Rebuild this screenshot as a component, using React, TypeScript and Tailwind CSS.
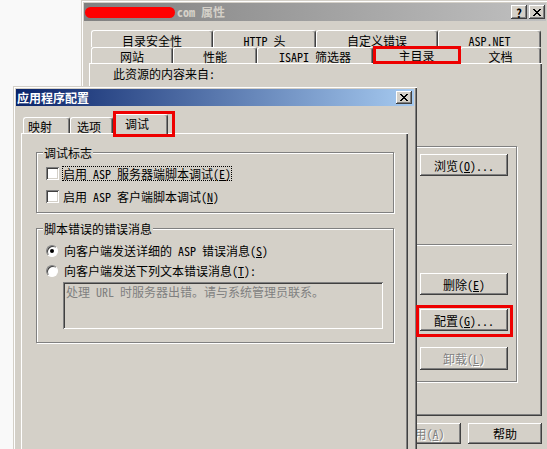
import React from "react";

const FONT =
  "font-['Noto_Sans_Mono_CJK_SC','Noto_Sans_CJK_SC','Noto_Sans_CJK_JP',sans-serif]";

type P = { children?: React.ReactNode; className?: string };

function XGlyph() {
  const rows = ["11000011", "01100110", "00111100", "00011000", "00111100", "01100110", "11000011"];
  const rects: React.ReactNode[] = [];
  rows.forEach((r, y) =>
    r.split("").forEach((c, x) => {
      if (c === "1") rects.push(<rect key={`${x}-${y}`} x={x} y={y} width={1} height={1} fill="#000" />);
    })
  );
  return (
    <svg width="8" height="7" viewBox="0 0 8 7" shapeRendering="crispEdges">
      {rects}
    </svg>
  );
}

function Btn({ children, className = "", disabled = false }: P & { disabled?: boolean }) {
  return (
    <div
      className={`flex items-center justify-center bg-[#d4d0c8] text-[12px] leading-[13px] shadow-[inset_-1px_-1px_#404040,inset_1px_1px_#ffffff,inset_-2px_-2px_#808080] ${
        disabled ? "text-[#808080] [text-shadow:1px_1px_0_#ffffff]" : "text-black"
      } ${className}`}
    >
      {children}
    </div>
  );
}

function Tab({ children, className = "" }: P) {
  return (
    <div
      className={`flex items-center bg-[#d4d0c8] rounded-t-[3px] border-t border-l border-r border-t-white border-l-white border-r-[#404040] shadow-[inset_-1px_0_#808080] leading-[13px] whitespace-nowrap ${className}`}
    >
      {children}
    </div>
  );
}

function Group({ label, children, className = "" }: P & { label: string }) {
  return (
    <div
      className={`relative border border-[#808080] shadow-[inset_1px_1px_#ffffff,1px_1px_#ffffff] ${className}`}
    >
      <span className="absolute left-[6px] -top-[7px] bg-[#d4d0c8] px-[1px] leading-[13px] whitespace-nowrap">
        {label}
      </span>
      {children}
    </div>
  );
}

function Checkbox() {
  return (
    <div className="w-[13px] h-[13px] shrink-0 bg-white shadow-[inset_1px_1px_#808080,inset_-1px_-1px_#ffffff,inset_2px_2px_#404040,inset_-2px_-2px_#d4d0c8]" />
  );
}

function Radio({ on = false }: { on?: boolean }) {
  return (
    <div className="w-[12px] h-[12px] shrink-0 rounded-full bg-white border border-t-[#808080] border-l-[#808080] border-b-white border-r-white shadow-[inset_1px_1px_#404040] flex items-center justify-center">
      {on && <div className="w-[4px] h-[4px] rounded-full bg-black" />}
    </div>
  );
}

const panelShadow =
  "shadow-[inset_1px_1px_#ffffff,inset_-1px_-1px_#404040,inset_-2px_-2px_#808080]";

export default function App() {
  return (
    <div className={`relative w-[547px] h-[449px] overflow-hidden bg-[#f9f9f9] ${FONT} text-[12px] text-black`}>
      {/* ---------- back dialog: properties ---------- */}
      <div className="absolute left-[81px] top-0 w-[468px] h-[470px] bg-[#d4d0c8] p-[3px] shadow-[inset_1px_1px_#d4d0c8,inset_2px_2px_#ffffff,inset_-1px_-1px_#404040,inset_-2px_-2px_#808080]">
        <div className="flex items-center h-[18px] bg-[linear-gradient(to_right,#808080,#c0c0c0)] pr-[1px]">
          <span className="ml-[1px] block w-[90px] h-[11px] rounded-[6px] bg-[#ff0000]" />
          <span className="ml-[2px] font-bold text-[#d4d0c8] leading-[12px] whitespace-pre">com 属性</span>
          <div className="ml-auto flex gap-[2px]">
            <Btn className="w-[16px] h-[14px] font-bold">?</Btn>
            <Btn className="w-[16px] h-[14px]">
              <XGlyph />
            </Btn>
          </div>
        </div>

        <div className="mt-[9px] ml-[7px] flex h-[17px]">
          <Tab className="w-[122px] justify-center pt-[2px]">目录安全性</Tab>
          <Tab className="w-[103px] justify-center pt-[2px]">HTTP 头</Tab>
          <Tab className="w-[122px] justify-center pt-[2px]">自定义错误</Tab>
          <Tab className="w-[103px] justify-center pt-[2px]">ASP.NET</Tab>
        </div>
        <div className="relative ml-[7px] flex h-[17px]">
          <Tab className="w-[82px] h-[16px] justify-center pt-[2px]">网站</Tab>
          <Tab className="w-[84px] h-[16px] justify-center pt-[2px]">性能</Tab>
          <Tab className="w-[116px] h-[16px] justify-center pt-[2px]">ISAPI 筛选器</Tab>
          <Tab className="relative z-10 w-[87px] h-[17px] justify-center pb-[2px]">主目录</Tab>
          <Tab className="w-[81px] h-[16px] justify-center pt-[2px]">文档</Tab>
          <span className="absolute z-20 left-[282px] -top-[1px] w-[88px] h-[18px] border-[3px] border-[#ee0000]" />
        </div>

        <div className={`-mt-[1px] ml-[5px] w-[453px] h-[353px] ${panelShadow}`}>
          <div className="pt-[5px] pl-[24px] leading-[12px]">此资源的内容来自:</div>
          <div className="mt-[66px] ml-[18px] w-[410px] flex flex-col items-end border border-[#808080] shadow-[inset_1px_1px_#ffffff,1px_1px_#ffffff] pb-[11px]">
            <Btn className="mt-[7px] mr-[8px] w-[88px] h-[22px]">
              浏览(<u>O</u>)...
            </Btn>
            <div className="mt-[68px] mr-[4px] w-[380px] h-[2px] border-t border-t-[#808080] border-b border-b-white" />
            <Btn className="mt-[27px] mr-[8px] w-[88px] h-[22px]">
              删除(<u>E</u>)
            </Btn>
            <div className="relative mt-[14px] mr-[8px]">
              <Btn className="w-[88px] h-[22px]">
                配置(<u>G</u>)...
              </Btn>
              <span className="absolute z-20 -left-[4px] -top-[4px] -right-[5px] -bottom-[6px] border-[3px] border-[#ee0000]" />
            </div>
            <Btn disabled className="mt-[16px] mr-[8px] w-[88px] h-[23px]">
              卸载(<u>L</u>)
            </Btn>
          </div>
        </div>

        <div className="mt-[7px] mr-[4px] flex justify-end gap-[7px]">
          <Btn className="w-[75px] h-[21px]">确定</Btn>
          <Btn className="w-[75px] h-[21px]">取消</Btn>
          <Btn disabled className="w-[75px] h-[21px]">
            应用(<u>A</u>)
          </Btn>
          <Btn className="w-[74px] h-[21px]">帮助</Btn>
        </div>
      </div>

      {/* ---------- front dialog: application configuration ---------- */}
      <div className="absolute z-10 left-[13px] top-[86px] w-[404px] h-[380px] bg-[#d4d0c8] p-[3px] shadow-[inset_1px_1px_#d4d0c8,inset_2px_2px_#ffffff,inset_-1px_-1px_#404040,inset_-2px_-2px_#808080]">
        <div className="flex items-center h-[17px] bg-[linear-gradient(to_right,#0a246a,#a6caf0)] pl-[1px] pr-[2px]">
          <span className="font-bold text-white leading-[13px] whitespace-nowrap">应用程序配置</span>
          <Btn className="ml-auto w-[16px] h-[13px]">
            <XGlyph />
          </Btn>
        </div>

        <div className="relative mt-[8px] ml-[5px] flex items-end h-[20px] pl-[2px]">
          <Tab className="w-[47px] h-[16px] mb-[1px] pl-[4px] pt-[2px]">映射</Tab>
          <Tab className="w-[43px] h-[16px] mb-[1px] pl-[6px] pt-[2px]">选项</Tab>
          <Tab className="relative z-10 w-[55px] h-[20px] pl-[11px] pb-[3px]">调试</Tab>
          <span className="absolute z-20 left-[92px] -top-[3px] w-[62px] h-[26px] border-[3px] border-[#ee0000]" />
        </div>

        <div className={`-mt-[1px] ml-[5px] w-[387px] h-[330px] pt-[19px] pl-[15px] ${panelShadow}`}>
          <Group label="调试标志" className="w-[358px] h-[61px] pt-[13px]">
            <div className="flex items-center h-[15px] pl-[9px] gap-[2px]">
              <Checkbox />
              <span className="ml-[1px] border border-dotted border-black px-[0px] leading-[13px] whitespace-nowrap">
                启用 ASP 服务器端脚本调试(<u>E</u>)
              </span>
            </div>
            <div className="mt-[8px] flex items-center h-[15px] pl-[9px] gap-[2px]">
              <Checkbox />
              <span className="ml-[1px] border border-transparent leading-[13px] whitespace-nowrap">
                启用 ASP 客户端脚本调试(<u>N</u>)
              </span>
            </div>
          </Group>

          <Group label="脚本错误的错误消息" className="mt-[15px] w-[358px] h-[115px] pt-[14px]">
            <div className="flex items-center h-[15px] pl-[9px] gap-[6px]">
              <Radio on />
              <span className="leading-[13px] whitespace-nowrap">向客户端发送详细的 ASP 错误消息(<u>S</u>)</span>
            </div>
            <div className="mt-[5px] flex items-center h-[15px] pl-[9px] gap-[6px]">
              <Radio />
              <span className="leading-[13px] whitespace-nowrap">向客户端发送下列文本错误消息(<u>T</u>):</span>
            </div>
            <div className="mt-[4px] ml-[26px] w-[320px] h-[47px] pt-[3px] pl-[3px] text-[#808080] leading-[13px] whitespace-nowrap bg-[#d4d0c8] shadow-[inset_1px_1px_#808080,inset_-1px_-1px_#ffffff,inset_2px_2px_#404040,inset_-2px_-2px_#d4d0c8]">
              处理 URL 时服务器出错。请与系统管理员联系。
            </div>
          </Group>
        </div>
      </div>
    </div>
  );
}
